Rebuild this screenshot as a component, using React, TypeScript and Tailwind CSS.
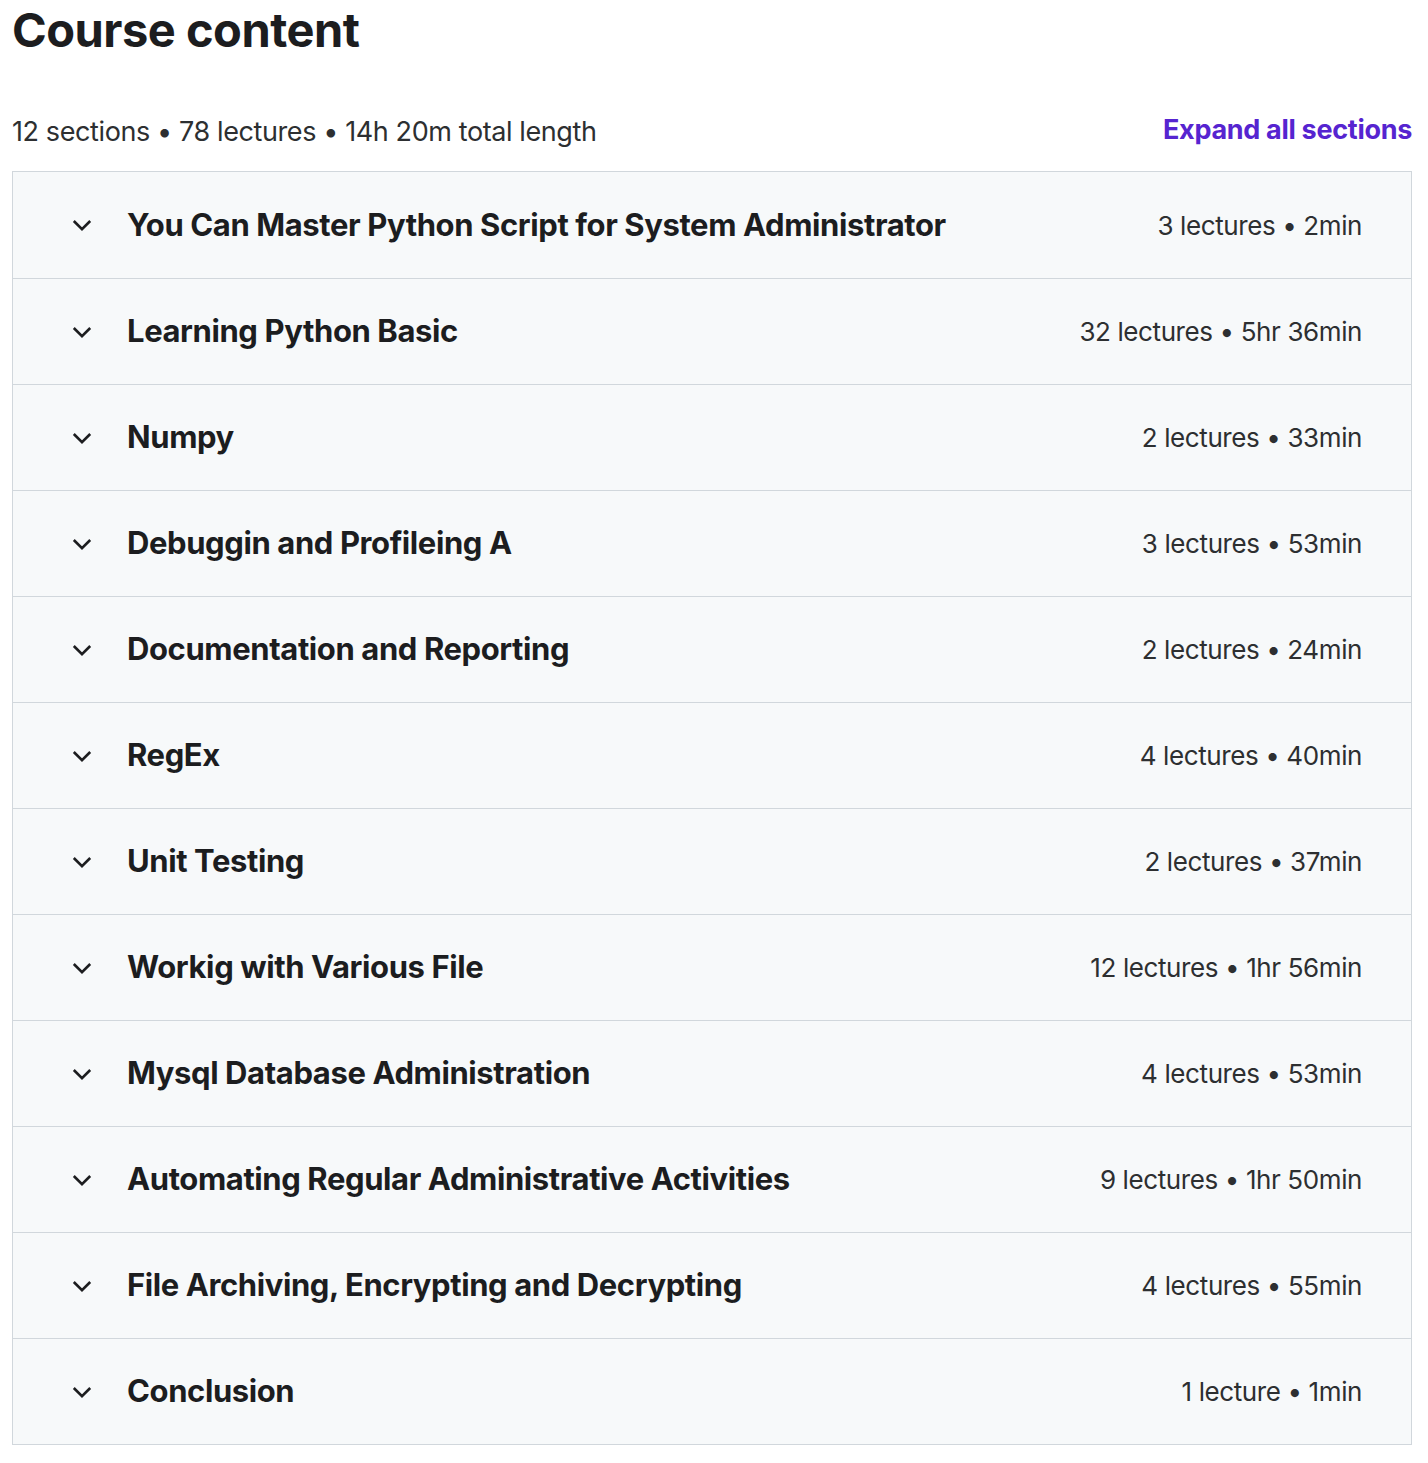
import React from "react";

const sections = [
  ["You Can Master Python Script for System Administrator", "3 lectures • 2min"],
  ["Learning Python Basic", "32 lectures • 5hr 36min"],
  ["Numpy", "2 lectures • 33min"],
  ["Debuggin and Profileing A", "3 lectures • 53min"],
  ["Documentation and Reporting", "2 lectures • 24min"],
  ["RegEx", "4 lectures • 40min"],
  ["Unit Testing", "2 lectures • 37min"],
  ["Workig with Various File", "12 lectures • 1hr 56min"],
  ["Mysql Database Administration", "4 lectures • 53min"],
  ["Automating Regular Administrative Activities", "9 lectures • 1hr 50min"],
  ["File Archiving, Encrypting and Decrypting", "4 lectures • 55min"],
  ["Conclusion", "1 lecture • 1min"],
];

function Chevron() {
  return (
    <svg width="24" height="24" viewBox="0 0 24 24" fill="none" stroke="#1c1d1f" strokeWidth="2.6" strokeLinecap="butt" strokeLinejoin="miter">
      <path d="M3.8 8 12 16.2 20.2 8" />
    </svg>
  );
}

export default function App() {
  return (
    <div className="bg-white text-[#1c1d1f] pl-[12px] pb-[20px]" style={{ fontFamily: "Inter, 'Noto Sans', sans-serif" }}>
      <div className="w-[1400px]">
        <h2 className="text-[47px] font-bold leading-[60px] tracking-[-0.5px]">Course content</h2>
        <div className="flex items-center justify-between mt-[51px] mb-[18px] h-[42px]">
          <div className="text-[27px] tracking-[-0.4px] text-[#2d2f31]">12 sections • 78 lectures • 14h 20m total length</div>
          <button className="text-[27px] font-bold text-[#5624d0] tracking-[-0.3px] -mt-[3px]">Expand all sections</button>
        </div>
        <div className="border border-[#d1d7dc]">
          {sections.map(([title, meta], i) => (
            <div
              key={i}
              className={`flex items-center h-[106px] bg-[#f7f9fa] pl-[57px] pr-[49px] ${i > 0 ? "border-t border-[#d1d7dc]" : ""}`}
            >
              <div className="w-[24px] h-[24px] flex items-center justify-center mr-[33px]">
                <Chevron />
              </div>
              <div className="flex-1 text-[31px] font-bold tracking-[-0.4px]">{title}</div>
              <div className="text-[26px] tracking-[-0.4px] text-[#2d2f31]">{meta}</div>
            </div>
          ))}
        </div>
      </div>
    </div>
  );
}
